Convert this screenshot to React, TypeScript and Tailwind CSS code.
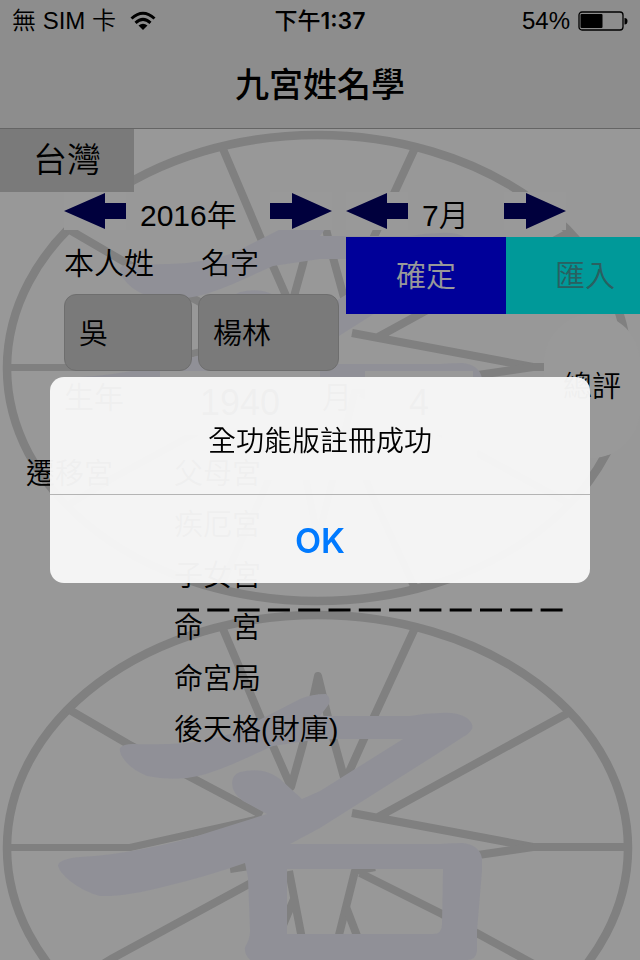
import type { ReactNode } from "react";

const palaces = [
  { side: "遷移宮", label: "父母宮" },
  { label: "疾厄宮" },
  { label: "子女宮" },
];

const fortunes = ["命　宮", "命宮局", "後天格(財庫)"];

function Wheel() {
  return (
    <svg viewBox="0 0 640 480" className="block w-full shrink-0" aria-hidden="true">
      <g fill="none" stroke="#d5d5d5" strokeWidth="8" strokeLinejoin="round">
        <ellipse cx="317.5" cy="239" rx="310.5" ry="233" strokeWidth="8.5" />
        <path d="M68 100 L128 135 L262 206" />
        <path d="M5 238.5 H130 L262 209" strokeWidth="7" />
        <path d="M223 20 L262 112 L291 178 L303 135 L318 67 L332 125 L345 172 L372 112 L415 19" />
        <path d="M570 103 L378 208 M352 204 L533 238 H630" />
        <path d="M533 238 L478 246" />
        <path d="M230 260 L262 255" />
        <path d="M68 376 L113 349 L262 268" />
        <path d="M220 459 L262 366 L294 290 M289 262 L303 335 L318 410 L340 322 L355 262 L375 258" />
        <path d="M346 298 L372 366 L415 459" />
        <path d="M360 264 L442 305 L570 375" />
      </g>
      <path
        fill="#f1f1fc"
        fillRule="evenodd"
        d="M120 139 Q123 135 133 135 Q160 136 187 134 Q213 131 233 124 L267 107 L300 90 Q312 85 326 85 Q331 89 329 95 L320 107 H410 Q425 104 440 104 Q458 103 467 109 Q474 115 472 120 Q469 125 463 128 L437 145 L320 219 L290 235 H440 Q452 234 463 234 Q480 236 482 250 L482 262 L477 322 V342 Q476 351 467 351 H250 Q244 345 245 338 Q250 330 250 322 L248 269 L245 254 Q205 268 167 277 Q125 288 100 287 Q84 283 70 272 Q60 264 58 257 Q58 250 80 248 Q115 246 147 239 Q180 233 213 222 L267 205 L243 192 Q232 184 232 174 Q232 166 240 163 Q252 160 263 162 Q272 164 280 170 L302 190 L320 182 L403 130 H320 L273 137 L233 155 Q205 167 187 169 Q165 171 147 167 Q130 160 123 149 Q119 143 120 139 Z M287 260 H443 L442 315 Q442 325 433 325 H287 Z"
      />
    </svg>
  );
}

function ArrowButton({ direction, label }: { direction: "left" | "right"; label: string }) {
  return (
    <button type="button" aria-label={label} className="h-[38px] w-[62px] shrink-0 bg-white">
      <svg viewBox="0 0 62 38" className="block h-full w-full" fill="#000066">
        {direction === "left" ? (
          <path d="M0 19 L41 1 V11 H62 V27 H41 V37 Z" />
        ) : (
          <path d="M62 19 L22 1 V11 H0 V27 H22 V37 Z" />
        )}
      </svg>
    </button>
  );
}

function Stepper({ name, children }: { name: string; children: ReactNode }) {
  return (
    <div className="flex h-[45px] items-start">
      <ArrowButton direction="left" label={`${name} -`} />
      {children}
      <ArrowButton direction="right" label={`${name} +`} />
    </div>
  );
}

function StatusBar() {
  return (
    <div className="grid h-10 grid-cols-3 items-center px-3 text-2xl leading-[42px]">
      <div className="flex items-center gap-[14px] whitespace-nowrap">
        <span>無 SIM 卡</span>
        <svg viewBox="0 0 26 20" className="h-5 w-[26px]" fill="none" stroke="#000" strokeWidth="3">
          <path d="M1.5 7.5 Q13 -3 24.5 7.5" />
          <path d="M5.5 11.8 Q13 5 20.5 11.8" />
          <path d="M8.5 14.6 Q13 11 17.5 14.6 L13 19 Z" fill="#000" stroke="none" />
        </svg>
      </div>
      <div className="text-center font-['Inter','Noto_Sans_CJK_TC',sans-serif] text-[23px] font-semibold">
        <span className="font-medium">下午</span>1:37
      </div>
      <div className="flex items-center justify-end gap-2">
        <span>54%</span>
        <svg viewBox="0 0 50 20" className="h-5 w-[50px]">
          <rect x="1" y="1" width="44" height="18" rx="3" fill="none" stroke="#000" strokeWidth="1.3" />
          <rect x="2.5" y="3" width="22" height="14" rx="1" fill="#000" />
          <path d="M46.5 7 Q49.5 7 49.5 10 Q49.5 13.5 46.5 13.5 Z" fill="#000" />
        </svg>
      </div>
    </div>
  );
}

function NameForm() {
  return (
    <div className="row-span-2 flex gap-[6px] pl-16">
      <label className="block w-32">
        <span className="block h-[57px] leading-[54px]">本人姓</span>
        <input
          type="text"
          defaultValue="吳"
          className="h-[77px] w-full rounded-xl border border-[#b8b8b8] bg-[#cbcbcb] px-[14px] pb-1 text-[29px]"
        />
      </label>
      <label className="block w-[141px]">
        <span className="block h-[57px] pl-[3px] text-[29px] leading-[54px]">名字</span>
        <input
          type="text"
          defaultValue="楊林"
          className="h-[77px] w-full rounded-xl border border-[#b8b8b8] bg-[#cbcbcb] px-[14px] pb-1 text-[29px]"
        />
      </label>
    </div>
  );
}

function BirthForm() {
  return (
    <div className="col-span-2 flex items-start pl-16">
      <label htmlFor="birth-year" className="w-24 leading-[54px]">
        生年
      </label>
      <input
        id="birth-year"
        type="text"
        defaultValue="1940"
        className="h-16 w-40 bg-white text-center text-4xl"
      />
      <label htmlFor="birth-month" className="w-[45px] pl-[2px] leading-[54px]">
        月
      </label>
      <input
        id="birth-month"
        type="text"
        defaultValue="4"
        className="h-16 w-[108px] bg-white text-center text-4xl"
      />
    </div>
  );
}

function AlertDialog() {
  return (
    <div className="fixed inset-0 flex items-center justify-center bg-black/40 px-[50px]">
      <div
        role="alertdialog"
        aria-labelledby="alert-message"
        className="w-full overflow-hidden rounded-[14px] bg-[#f7f7f7]/97"
      >
        <p
          id="alert-message"
          className="border-b border-[#b4b4b4] pt-11 pb-8 text-center text-[28px] leading-[41px]"
        >
          全功能版註冊成功
        </p>
        <button
          type="button"
          className="h-[88px] w-full pt-[2px] text-center font-['Inter',sans-serif] text-[34px] font-semibold text-[#007aff]"
        >
          OK
        </button>
      </div>
    </div>
  );
}

export default function App() {
  return (
    <div className="relative min-h-screen overflow-hidden bg-[#fdfdfd] font-['Liberation_Sans','Noto_Sans_CJK_TC',sans-serif] text-[30px] font-[350] text-black">
      <header className="border-b border-[#a8a8a8] bg-[#ececec]">
        <StatusBar />
        <h1 className="h-[88px] text-center text-[34px] leading-[90px] font-medium">九宮姓名學</h1>
      </header>

      <main className="relative">
        <div className="absolute inset-x-0 top-0 flex flex-col">
          <Wheel />
          <Wheel />
        </div>

        <div className="relative">
          <button type="button" className="block h-[63px] w-[134px] bg-[#cbcbcb] text-[34px]">
            台灣
          </button>

          <div className="flex gap-[14px] pl-16">
            <Stepper name="年">
              <span className="w-36 pl-[14px] leading-[47px]">2016年</span>
            </Stepper>
            <Stepper name="月">
              <span className="w-24 pl-[14px] leading-[47px]">7月</span>
            </Stepper>
          </div>

          <div className="grid grid-cols-[346px_198px_1fr] grid-rows-[77px_57px_64px_23px]">
            <NameForm />
            <div className="col-span-2 flex">
              <button type="button" className="w-40 bg-[#0000ff] text-white">
                確定
              </button>
              <button type="button" className="flex-1 bg-[#00ffff] pl-6 text-[#46a0a0]">
                匯入
              </button>
            </div>
            <button
              type="button"
              className="col-start-3 row-span-3 row-start-2 rounded-full bg-white pt-1 text-[29px] whitespace-nowrap"
            >
              總評
            </button>
            <BirthForm />
          </div>

          <ul className="flex flex-col gap-[21px] pt-px text-[29px] leading-[30px]">
            {palaces.map((p) => (
              <li key={p.label} className="flex pl-[26px]">
                <span className="w-[148px]">{p.side}</span>
                <span>{p.label}</span>
              </li>
            ))}
          </ul>
          <svg viewBox="0 0 388 4" className="mt-[17px] ml-[176px] block h-1 w-[388px]">
            <path d="M1 2 H388" stroke="#000" strokeWidth="3" strokeDasharray="22 8.3" />
          </svg>
          <ul className="flex flex-col gap-[21px] pt-px pl-[174px] text-[29px] leading-[30px]">
            {fortunes.map((f) => (
              <li key={f}>{f}</li>
            ))}
          </ul>
        </div>
      </main>

      <AlertDialog />
    </div>
  );
}
